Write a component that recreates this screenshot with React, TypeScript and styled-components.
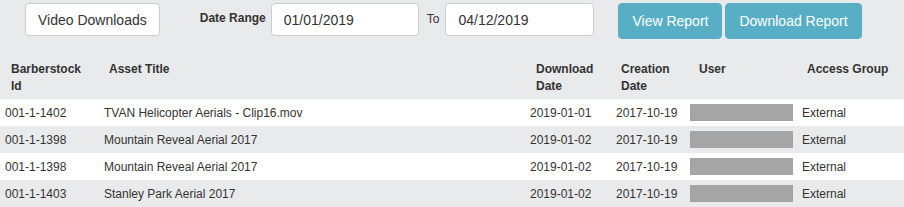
import React from "react";
import styled, { createGlobalStyle } from "styled-components";

const Global = createGlobalStyle`
  html, body { margin: 0; padding: 0; background: #e9eaec; }
  body { font-family: "Liberation Sans", Arial, sans-serif; color: #333; }
  * { box-sizing: border-box; }
`;

const Page = styled.div`
  width: 904px;
  height: 207px;
  overflow: hidden;
  background: #e9eaec;
`;

const Toolbar = styled.div`
  display: flex;
  align-items: flex-start;
  padding: 3px 0 0 25px;
  height: 39px;
`;

const Button = styled.button<{ $primary?: boolean; $gap?: number }>`
  height: ${(p) => (p.$primary ? 36 : 33)}px;
  margin-left: ${(p) => p.$gap ?? 0}px;
  padding: 0 ${(p) => (p.$primary ? 13 : 12)}px;
  border-radius: 4px;
  font-family: "Liberation Sans", Arial, sans-serif;
  font-size: 14px;
  border: 1px solid ${(p) => (p.$primary ? "#58afc5" : "#cccccc")};
  background: ${(p) => (p.$primary ? "#58afc5" : "#ffffff")};
  color: ${(p) => (p.$primary ? "#ffffff" : "#333333")};
  cursor: pointer;
`;

const Label = styled.label<{ $bold?: boolean; $gap: number; $after: number }>`
  font-size: 12px;
  font-weight: ${(p) => (p.$bold ? 700 : 400)};
  margin: ${(p) => (p.$bold ? 8 : 9)}px ${(p) => p.$after}px 0 ${(p) => p.$gap}px;
  color: #333;
`;

const DateInput = styled.input<{ $w: number }>`
  width: ${(p) => p.$w}px;
  height: 33px;
  padding: 0 12px;
  border: 1px solid #cccccc;
  border-radius: 4px;
  background: #fff;
  font-family: "Liberation Sans", Arial, sans-serif;
  font-size: 14px;
  color: #333;
  outline: none;
`;

const cols = "99px 426px 86px 74px 112px 1fr";

const HeadRow = styled.div`
  display: grid;
  grid-template-columns: ${cols};
  align-items: start;
  margin-top: 22px;
  padding-bottom: 4px;
`;

const HeadCell = styled.div<{ $pad: number }>`
  padding-left: ${(p) => p.$pad}px;
  font-size: 12px;
  font-weight: 700;
  line-height: 17px;
  color: #333;
`;

const Row = styled.div<{ $odd: boolean }>`
  display: grid;
  grid-template-columns: ${cols};
  align-items: center;
  height: 27px;
  background: ${(p) => (p.$odd ? "#ffffff" : "#e9eaec")};
`;

const Cell = styled.div`
  padding-left: 5px;
  font-size: 12px;
  color: #333;
  white-space: nowrap;
`;

const Redacted = styled.div`
  width: 103px;
  height: 17px;
  background: #a5a5a5;
`;

const headers: { lines: string[]; pad: number }[] = [
  { lines: ["Barberstock", "Id"], pad: 11 },
  { lines: ["Asset Title"], pad: 10 },
  { lines: ["Download", "Date"], pad: 11 },
  { lines: ["Creation", "Date"], pad: 10 },
  { lines: ["User"], pad: 14 },
  { lines: ["Access Group"], pad: 10 },
];

const rows = [
  { id: "001-1-1402", title: "TVAN Helicopter Aerials - Clip16.mov", dl: "2019-01-01", created: "2017-10-19", group: "External" },
  { id: "001-1-1398", title: "Mountain Reveal Aerial 2017", dl: "2019-01-02", created: "2017-10-19", group: "External" },
  { id: "001-1-1398", title: "Mountain Reveal Aerial 2017", dl: "2019-01-02", created: "2017-10-19", group: "External" },
  { id: "001-1-1403", title: "Stanley Park Aerial 2017", dl: "2019-01-02", created: "2017-10-19", group: "External" },
];

export default function App() {
  return (
    <Page>
      <Global />
      <Toolbar>
        <Button>Video Downloads</Button>
        <Label $bold $gap={40} $after={5}>Date Range</Label>
        <DateInput $w={148} defaultValue="01/01/2019" />
        <Label $gap={8} $after={6}>To</Label>
        <DateInput $w={149} defaultValue="04/12/2019" />
        <Button $primary $gap={24}>View Report</Button>
        <Button $primary $gap={3}>Download Report</Button>
      </Toolbar>
      <HeadRow>
        {headers.map((h, i) => (
          <HeadCell key={i} $pad={h.pad}>
            {h.lines.map((l, j) => (
              <React.Fragment key={j}>
                {j > 0 && <br />}
                {l}
              </React.Fragment>
            ))}
          </HeadCell>
        ))}
      </HeadRow>
      {rows.map((r, i) => (
        <Row key={i} $odd={i % 2 === 0}>
          <Cell>{r.id}</Cell>
          <Cell>{r.title}</Cell>
          <Cell>{r.dl}</Cell>
          <Cell>{r.created}</Cell>
          <Cell>
            <Redacted />
          </Cell>
          <Cell>{r.group}</Cell>
        </Row>
      ))}
    </Page>
  );
}
